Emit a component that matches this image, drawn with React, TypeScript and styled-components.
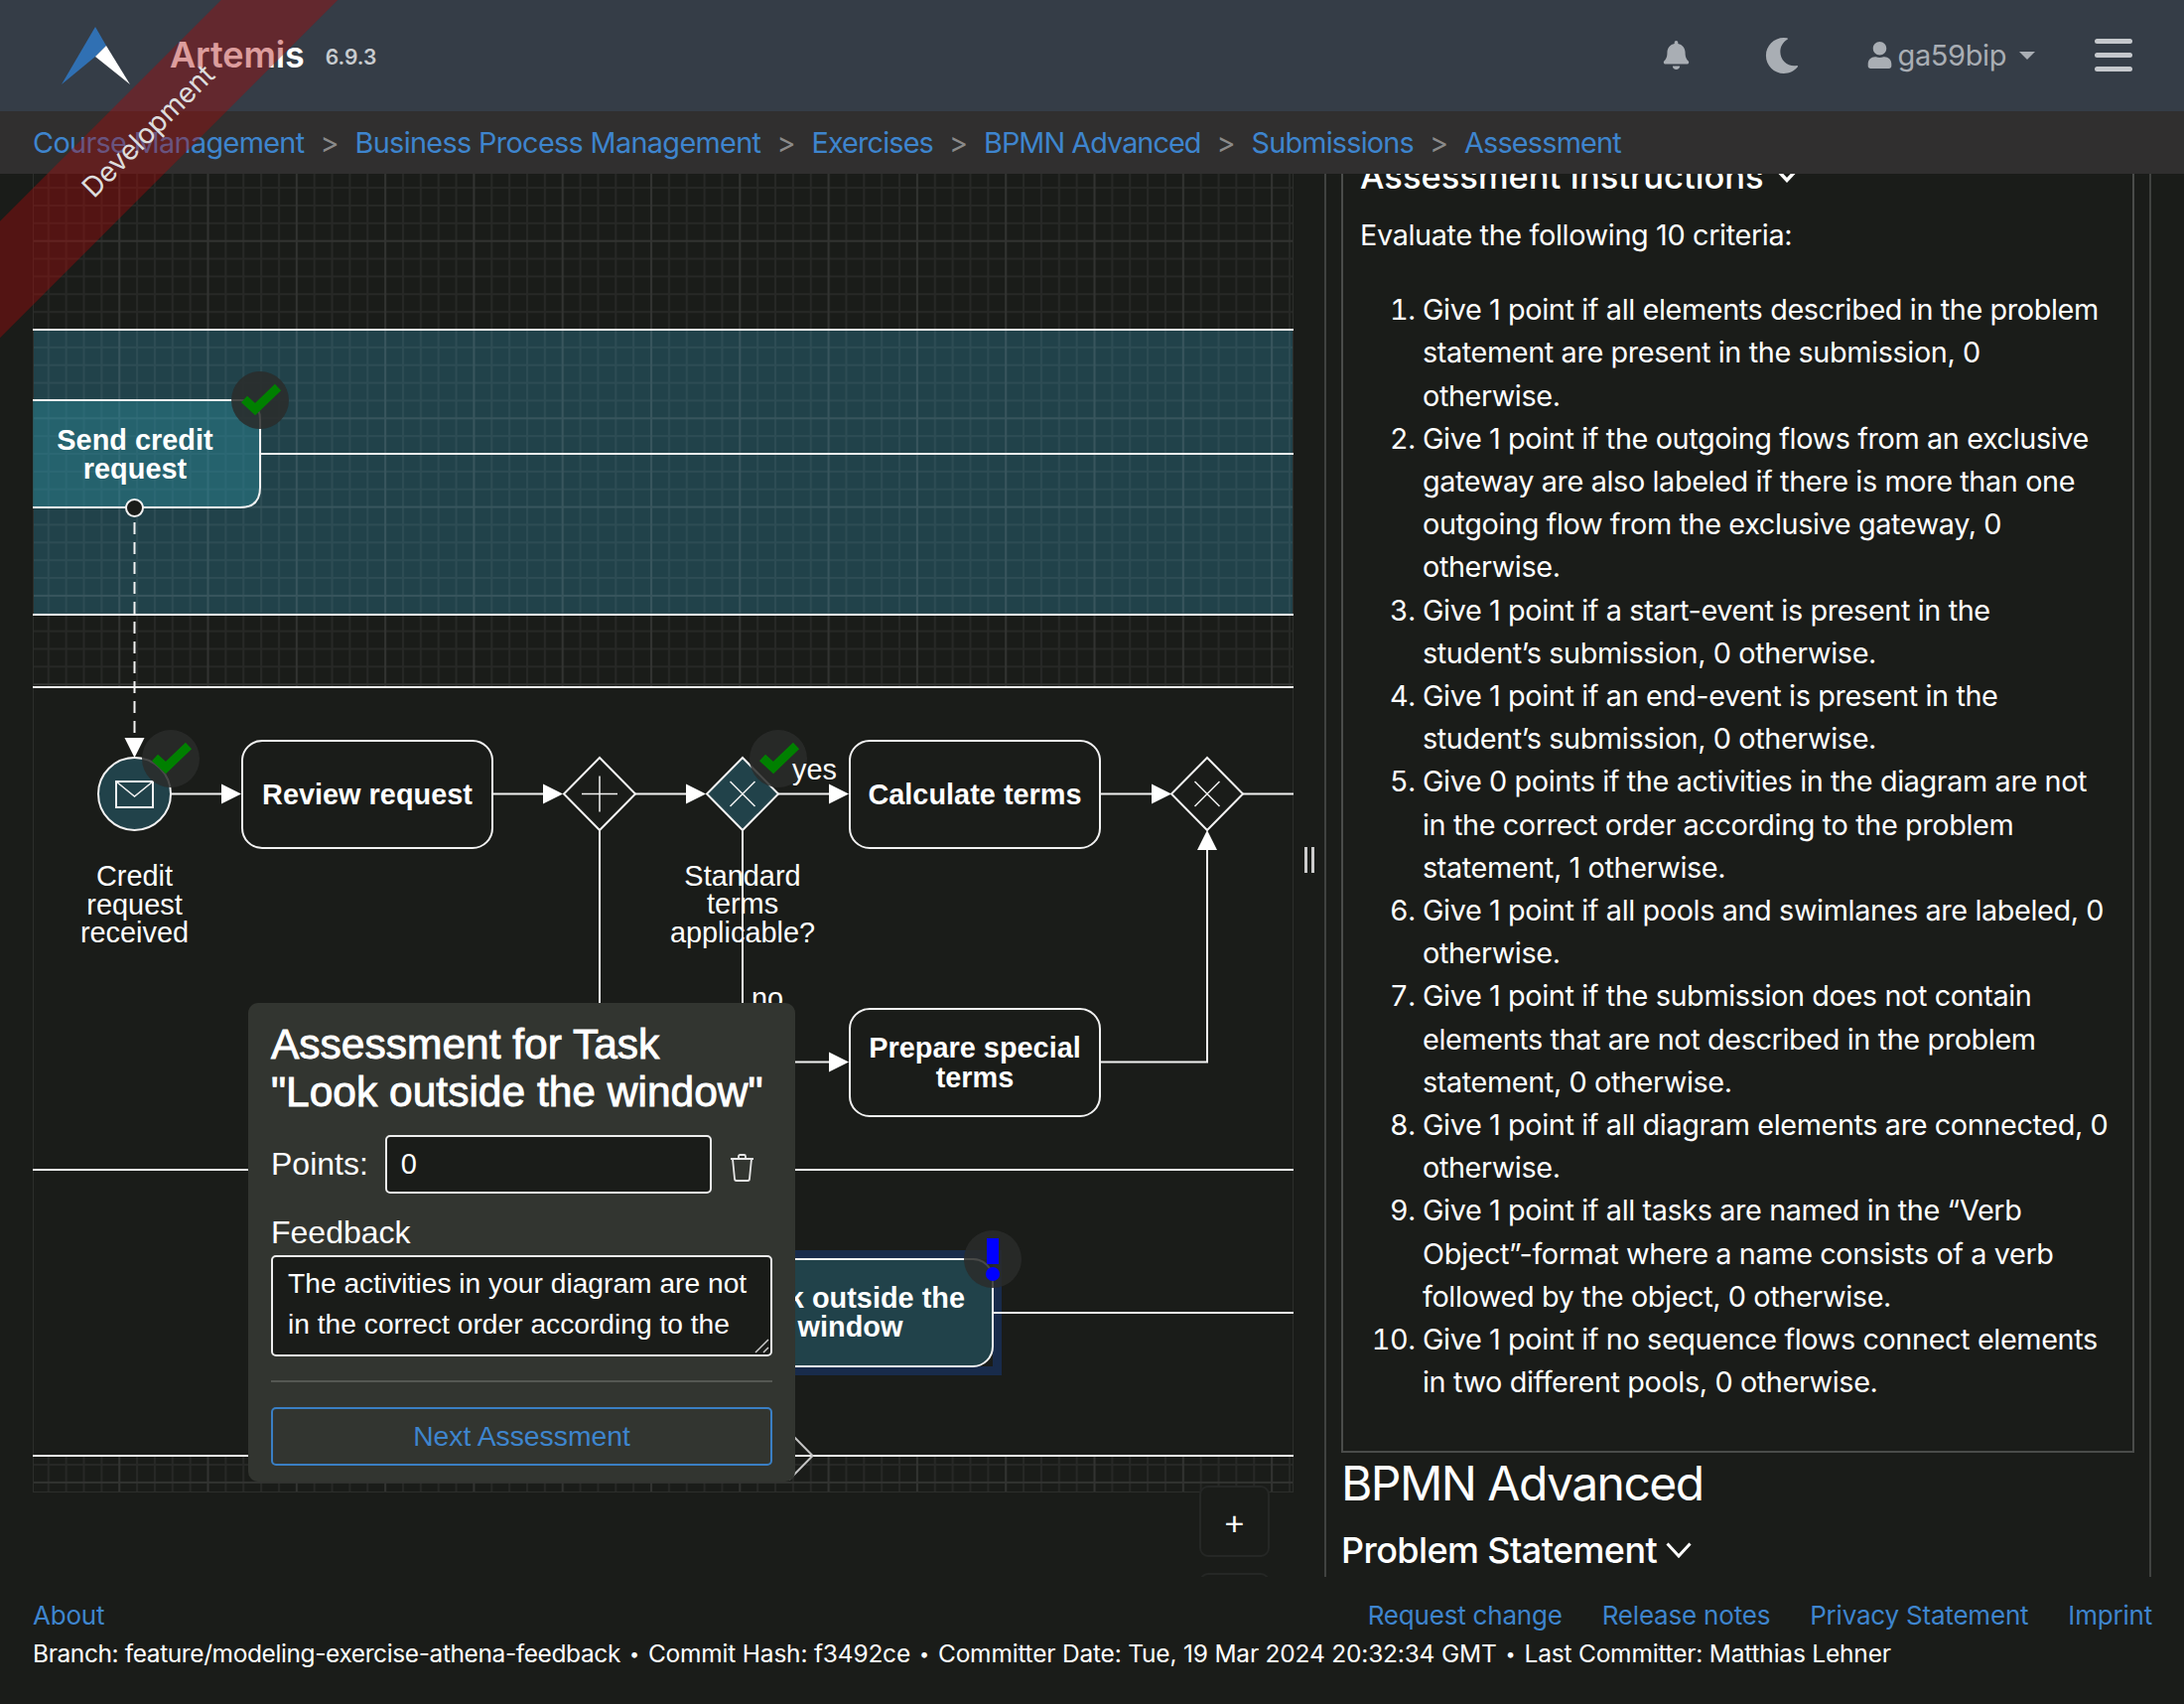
import React from 'react';
import styled, { createGlobalStyle } from 'styled-components';
import { FaBell, FaMoon, FaUser } from 'react-icons/fa';

const GlobalStyle = createGlobalStyle`
  html, body {
    margin: 0;
    padding: 0;
    background: #1a1c19;
  }
  * {
    box-sizing: border-box;
  }
`;

const Page = styled.div`
  position: relative;
  width: 2200px;
  height: 1716px;
  overflow: hidden;
  background: #1a1c19;
  color: #fff;
  font-family: Inter, "Noto Sans", sans-serif;
  font-size: 28.8px;
  line-height: 43.2px;
`;

const Ribbon = styled.div`
  position: absolute;
  left: -109px;
  top: 99px;
  width: 500px;
  height: 83px;
  padding-left: 24px;
  transform: rotate(-45deg);
  background: rgba(170, 10, 10, 0.4);
  color: #ddd;
  font-size: 28px;
  display: flex;
  align-items: center;
  justify-content: center;
  pointer-events: none;
  z-index: 10;
`;

const Navbar = styled.header`
  height: 112px;
  background: #353d47;
  display: flex;
  align-items: center;
  padding: 0 52px 0 62px;
`;

const Brand = styled.span`
  margin-left: 40px;
  font-size: 36px;
  font-weight: 600;
  letter-spacing: -0.1px;
`;

const Version = styled.span`
  margin-left: 21px;
  margin-top: 4px;
  font-size: 21px;
  font-weight: 600;
  color: #c8ccd0;
`;

const NavRight = styled.div`
  margin-left: auto;
  display: flex;
  align-items: center;
  color: #a9aeb4;
`;

const NavUser = styled.span`
  display: flex;
  align-items: center;
  margin-left: 67px;
  gap: 5px;
  font-size: 29px;
  letter-spacing: -0.4px;
`;

const Caret = styled.i`
  width: 0;
  height: 0;
  margin-left: 8px;
  border-left: 8px solid transparent;
  border-right: 8px solid transparent;
  border-top: 8px solid #a9aeb4;
`;

const Burger = styled.div`
  margin-left: 60px;
  width: 38px;
  display: flex;
  flex-direction: column;
  gap: 9px;
`;

const BurgerBar = styled.i`
  display: block;
  height: 5px;
  border-radius: 3px;
  background: #c5c8cc;
`;

const Breadcrumb = styled.nav`
  position: relative;
  z-index: 2;
  height: 63px;
  background: #302f2f;
  padding: 0 33px;
  display: flex;
  align-items: center;
  gap: 16px;
`;

const Link = styled.a`
  color: #3e85ce;
  text-decoration: none;
`;

const Crumb = styled(Link)<{ $spacing: number }>`
  letter-spacing: ${props => props.$spacing}px;
`;

const CrumbSep = styled.span`
  color: #8a8a8a;
`;

const FooterLink = styled(Link)`
  letter-spacing: -0.2px;
`;

const Main = styled.main`
  height: 1413px;
  padding-left: 33px;
  display: flex;
  overflow: hidden;
`;

const Editor = styled.section`
  position: relative;
  flex: 0 0 1270px;
  height: 100%;
`;

const Diagram = styled.svg`
  display: block;
`;

const Label = styled.text<{ $bold?: boolean; $center?: boolean }>`
  font-family: "Liberation Sans", Arial, sans-serif;
  font-size: 28.9px;
  font-weight: ${props => (props.$bold ? 700 : 400)};
  fill: #fff;
  text-anchor: ${props => (props.$bold || props.$center ? 'middle' : 'start')};
`;

const ZoomButton = styled.div<{ $top: number }>`
  position: absolute;
  left: 1175px;
  top: ${props => props.$top}px;
  width: 71px;
  height: 72px;
  padding-top: 5px;
  border: 2px solid #252725;
  border-radius: 9px;
  background: #1a1c19;
  display: flex;
  align-items: center;
  justify-content: center;
  font-family: "Liberation Sans", sans-serif;
  font-size: 34px;
`;

const Popup = styled.div`
  position: absolute;
  left: 217px;
  top: 835px;
  width: 551px;
  height: 482px;
  padding: 18px 23px 0 23px;
  border-radius: 10px;
  background: #323530;
  font-family: "Liberation Sans", Arial, sans-serif;
`;

const PopupTitle = styled.h4`
  margin: 0;
  font-size: 42.5px;
  line-height: 48px;
  font-weight: 400;
  -webkit-text-stroke: 0.9px #fff;
  white-space: nowrap;
`;

const PointsRow = styled.div`
  display: flex;
  align-items: center;
  margin-top: 19px;
  font-size: 32px;
`;

const PointsInput = styled.input`
  width: 329px;
  height: 59px;
  margin-left: 17px;
  padding: 0 14px;
  border: 2.5px solid #eee;
  border-radius: 5px;
  background: #1a1c19;
  color: #fff;
  font-family: inherit;
  font-size: 29px;
  outline: none;
`;

const TrashIcon = styled.svg`
  margin-left: 18px;
  margin-top: 6px;
`;

const FeedbackLabel = styled.div`
  margin-top: 16px;
  font-size: 32px;
  line-height: 46px;
`;

const FeedbackField = styled.div`
  position: relative;
  width: 505px;
  height: 102px;
`;

const FeedbackInput = styled.textarea`
  display: block;
  width: 100%;
  height: 100%;
  padding: 6px 15px;
  border: 2.5px solid #eee;
  border-radius: 5px;
  background: #1a1c19;
  color: #fff;
  font-family: inherit;
  font-size: 28.2px;
  line-height: 41px;
  overflow: hidden;
  resize: none;
  outline: none;
`;

const ResizeGrip = styled.svg`
  position: absolute;
  right: 3px;
  bottom: 3px;
`;

const PopupRule = styled.hr`
  margin: 24px 0 25px;
  border: 0;
  border-top: 2px solid #555853;
`;

const NextButton = styled.button`
  display: block;
  width: 505px;
  height: 59px;
  padding-top: 1px;
  border: 2.5px solid #3a7fc4;
  border-radius: 5px;
  background: transparent;
  color: #3e85ce;
  font-family: inherit;
  font-size: 28.3px;
`;

const Handle = styled.div`
  flex: 0 0 31px;
  display: flex;
  align-items: flex-start;
  justify-content: center;
  gap: 4px;
  padding-top: 678px;
`;

const HandleBar = styled.i`
  display: block;
  width: 3px;
  height: 26px;
  background: #ccc;
`;

const SidePanel = styled.aside`
  flex: 0 0 833px;
  height: 100%;
  padding: 0 15px;
  border-left: 2px solid #404240;
  border-right: 2px solid #404240;
  overflow: hidden;
`;

const InstructionBox = styled.div`
  height: 1314px;
  margin-top: -26px;
  padding: 0 17px;
  border: 2px solid #4a4c4a;
  border-top: 0;
`;

const InstructionHead = styled.h3`
  margin: 0;
  height: 66px;
  padding-bottom: 8px;
  display: flex;
  align-items: center;
  gap: 14px;
  font-size: 34.5px;
  font-weight: 500;
`;

const Intro = styled.p`
  margin: 0 0 32px;
  letter-spacing: -0.35px;
`;

const Criteria = styled.ol`
  margin: 0;
  padding-left: 63px;
  white-space: nowrap;
  letter-spacing: -0.38px;
`;

const ExerciseTitle = styled.h2`
  margin: 0;
  font-size: 48px;
  line-height: 62px;
  font-weight: 400;
  letter-spacing: -1.55px;
`;

const ProblemHead = styled.h3`
  margin: 11px 0 0;
  display: flex;
  align-items: center;
  gap: 9px;
  font-size: 36px;
  line-height: 50px;
  font-weight: 500;
  letter-spacing: -0.6px;
`;

const Footer = styled.footer`
  padding: 19px 32px 0 33px;
  font-size: 26px;
  line-height: 39px;
`;

const FooterRow = styled.div`
  display: flex;
  align-items: center;
  justify-content: space-between;
`;

const FooterLinks = styled.div`
  display: flex;
  gap: 40px;
`;

const BuildInfo = styled.div`
  display: flex;
  align-items: center;
  gap: 9px;
  font-size: 24.5px;
  letter-spacing: -0.2px;
`;

const BranchName = styled.span`
  letter-spacing: -0.4px;
`;

const BuildDot = styled.span`
  font-size: 18px;
`;

const crumbs = [
  { label: 'Course Management', spacing: -0.65 },
  { label: 'Business Process Management', spacing: -0.65 },
  { label: 'Exercises', spacing: -0.85 },
  { label: 'BPMN Advanced', spacing: -0.95 },
  { label: 'Submissions', spacing: -0.8 },
  { label: 'Assessment', spacing: -0.8 },
];

const criteria = [
  ['Give 1 point if all elements described in the problem', 'statement are present in the submission, 0', 'otherwise.'],
  ['Give 1 point if the outgoing flows from an exclusive', 'gateway are also labeled if there is more than one', 'outgoing flow from the exclusive gateway, 0', 'otherwise.'],
  ['Give 1 point if a start-event is present in the', 'student’s submission, 0 otherwise.'],
  ['Give 1 point if an end-event is present in the', 'student’s submission, 0 otherwise.'],
  ['Give 0 points if the activities in the diagram are not', 'in the correct order according to the problem', 'statement, 1 otherwise.'],
  ['Give 1 point if all pools and swimlanes are labeled, 0', 'otherwise.'],
  ['Give 1 point if the submission does not contain', 'elements that are not described in the problem', 'statement, 0 otherwise.'],
  ['Give 1 point if all diagram elements are connected, 0', 'otherwise.'],
  ['Give 1 point if all tasks are named in the “Verb', 'Object”-format where a name consists of a verb', 'followed by the object, 0 otherwise.'],
  ['Give 1 point if no sequence flows connect elements', 'in two different pools, 0 otherwise.'],
];

const WHITE = '#f2f2f2';
const TEAL = '#21424a';
const DARK = '#1a1c19';

const Arrow = ({ x, y, up }: { x: number; y: number; up?: boolean }) =>
  up ? (
    <polygon points={`${x},${y} ${x - 10},${y + 20} ${x + 10},${y + 20}`} fill="#fff" />
  ) : (
    <polygon points={`${x},${y} ${x - 20},${y - 10} ${x - 20},${y + 10}`} fill="#fff" />
  );

const Task = ({ x, y, lines, base }: { x: number; y: number; lines: string[]; base: number }) => (
  <g>
    <rect x={x} y={y} width={252} height={108} rx={20} fill={DARK} stroke={WHITE} strokeWidth={2} />
    {lines.map((line, i) => (
      <Label key={line} $bold x={x + 126} y={base + i * 29.5}>{line}</Label>
    ))}
  </g>
);

const Gateway = ({ cx, cy, fill, plus }: { cx: number; cy: number; fill: string; plus?: boolean }) => (
  <g>
    <polygon points={`${cx},${cy - 36.5} ${cx + 36},${cy} ${cx},${cy + 36.5} ${cx - 36},${cy}`} fill={fill} stroke={WHITE} strokeWidth={2} />
    {plus ? (
      <path d={`M${cx - 18} ${cy}H${cx + 18}M${cx} ${cy - 18}V${cy + 18}`} stroke={WHITE} strokeWidth={1.5} />
    ) : (
      <path d={`M${cx - 12.5} ${cy - 12.5}L${cx + 12.5} ${cy + 12.5}M${cx + 12.5} ${cy - 12.5}L${cx - 12.5} ${cy + 12.5}`} stroke={WHITE} strokeWidth={1.5} />
    )}
  </g>
);

const Check = ({ cx, cy }: { cx: number; cy: number }) => (
  <g>
    <circle cx={cx} cy={cy} r={29} fill="#2a2c2a" fillOpacity={0.85} />
    <path d={`M${cx - 16} ${cy - 1}L${cx - 5} ${cy + 9}L${cx + 18} ${cy - 13}`} fill="none" stroke="#008000" strokeWidth={9} />
  </g>
);

const BpmnDiagram = () => (
  <Diagram width={1270} height={1328} viewBox="33 175 1270 1328">
    <defs>
      <pattern id="minor" x={29.9} y={63.1} width={17.86} height={17.86} patternUnits="userSpaceOnUse">
        <path d="M17.86 1H1V17.86" fill="none" stroke="#fff" strokeOpacity={0.055} strokeWidth={2} />
      </pattern>
      <pattern id="major" x={29.9} y={63.1} width={89.3} height={89.3} patternUnits="userSpaceOnUse">
        <path d="M89.3 1H1V89.3" fill="none" stroke="#fff" strokeOpacity={0.05} strokeWidth={2} />
      </pattern>
    </defs>

    <rect x={33} y={332} width={1270} height={287} fill={TEAL} />
    <rect x={33} y={175} width={1270} height={1328} fill="url(#minor)" />
    <rect x={33} y={175} width={1270} height={1328} fill="url(#major)" />
    <rect x={33} y={692} width={1270} height={774} fill={DARK} />
    <path d="M33 175V1503H1303V175" fill="none" stroke="#2c2e2b" strokeWidth={2} />

    <path d="M33 332H1303M33 619H1303M33 692H1303M33 1178H1303M33 1466H1303" stroke={WHITE} strokeWidth={2} />

    <path d="M262 457H1303" stroke={WHITE} strokeWidth={2} />
    <path d="M33 403H242Q262 403 262 423V491Q262 511 242 511H33" fill="#2a8a99" fillOpacity={0.45} stroke={WHITE} strokeWidth={2} />
    <Label $bold x={136} y={453}>Send credit</Label>
    <Label $bold x={136} y={482}>request</Label>
    <Check cx={262} cy={403} />

    <path d="M135.5 526V745" stroke={WHITE} strokeWidth={2} strokeDasharray="12 8" />
    <circle cx={135.5} cy={511.5} r={8.5} fill={DARK} stroke={WHITE} strokeWidth={2} />
    <polygon points="135.5,763 125.5,743 145.5,743" fill="#fff" />

    <path d="M172 799.5H225" stroke={WHITE} strokeWidth={2} />
    <Arrow x={243} y={799.5} />
    <circle cx={135.5} cy={799.5} r={36.5} fill={TEAL} stroke={WHITE} strokeWidth={2} />
    <rect x={117} y={787} width={37} height={26} fill="none" stroke={WHITE} strokeWidth={2} />
    <path d="M117 787L135.5 802L154 787" fill="none" stroke={WHITE} strokeWidth={1.5} />
    <Check cx={172} cy={764} />
    <Label $center x={135.5} y={892}>Credit</Label>
    <Label $center x={135.5} y={921}>request</Label>
    <Label $center x={135.5} y={949}>received</Label>

    <Task x={244} y={746} lines={['Review request']} base={810} />
    <path d="M496 799.5H550" stroke={WHITE} strokeWidth={2} />
    <Arrow x={567} y={799.5} />
    <path d="M604 836V1010" stroke={WHITE} strokeWidth={2} />
    <Gateway cx={604} cy={799.5} fill={DARK} plus />

    <path d="M640 799.5H694" stroke={WHITE} strokeWidth={2} />
    <Arrow x={711} y={799.5} />
    <path d="M748 836V1020" stroke={WHITE} strokeWidth={2} />
    <Label $center x={748} y={892}>Standard</Label>
    <Label $center x={748} y={920}>terms</Label>
    <Label $center x={748} y={949}>applicable?</Label>
    <Gateway cx={748} cy={799.5} fill={TEAL} />
    <Check cx={784} cy={764} />
    <path d="M784 799.5H838" stroke={WHITE} strokeWidth={2} />
    <Arrow x={855} y={799.5} />
    <Label x={798} y={785}>yes</Label>
    <Label x={757} y={1015}>no</Label>

    <Task x={856} y={746} lines={['Calculate terms']} base={810} />
    <path d="M1108 799.5H1162" stroke={WHITE} strokeWidth={2} />
    <Arrow x={1180} y={799.5} />
    <Gateway cx={1216} cy={799.5} fill={DARK} />
    <path d="M1252 799.5H1303" stroke={WHITE} strokeWidth={2} />

    <path d="M780 1069.5H838" stroke={WHITE} strokeWidth={2} />
    <Arrow x={855} y={1069.5} />
    <Task x={856} y={1016} lines={['Prepare special', 'terms']} base={1065} />
    <path d="M1108 1069.5H1216V850" fill="none" stroke={WHITE} strokeWidth={2} />
    <Arrow x={1216} y={836} up />

    <rect x={738} y={1259} width={271} height={126} fill="#182b4b" />
    <rect x={720} y={1268} width={280} height={108} fill={DARK} />
    <rect x={720} y={1268} width={280} height={108} rx={20} fill={TEAL} stroke={WHITE} strokeWidth={2} />
    <Label $bold x={856.5} y={1317}>Look outside the</Label>
    <Label $bold x={856.5} y={1346}>window</Label>
    <path d="M1000 1322H1303" stroke={WHITE} strokeWidth={2} />
    <circle cx={1000} cy={1268} r={29} fill="#2a2c2a" fillOpacity={0.85} />
    <rect x={994} y={1247} width={12} height={26} fill="#0000ff" />
    <circle cx={1000} cy={1283} r={7} fill="#0000ff" />

    <path d="M795 1442L818.6 1466L795 1490" fill="none" stroke="#c4c4c4" strokeWidth={2} />
  </Diagram>
);

const App = () => (
  <Page>
    <GlobalStyle />
    <Navbar>
      <svg width="69" height="58" viewBox="0 0 69 58">
        <polygon points="34,0 0,58 34,30 45,19" fill="#3070b3" />
        <polygon points="45,19 69,58 34,30" fill="#fff" />
      </svg>
      <Brand>Artemis</Brand>
      <Version>6.9.3</Version>
      <NavRight>
        <FaBell size={29} />
        <FaMoon size={36} style={{ marginLeft: 74 }} />
        <NavUser>
          <FaUser size={27} />
          ga59bip
          <Caret />
        </NavUser>
        <Burger>
          <BurgerBar />
          <BurgerBar />
          <BurgerBar />
        </Burger>
      </NavRight>
    </Navbar>

    <Breadcrumb>
      {crumbs.map((crumb, i) => (
        <React.Fragment key={crumb.label}>
          {i > 0 && <CrumbSep>&gt;</CrumbSep>}
          <Crumb href="#" $spacing={crumb.spacing}>{crumb.label}</Crumb>
        </React.Fragment>
      ))}
    </Breadcrumb>

    <Main>
      <Editor>
        <BpmnDiagram />
        <ZoomButton $top={1321}>+</ZoomButton>
        <ZoomButton $top={1409} />
        <Popup>
          <PopupTitle>
            Assessment for Task
            <br />
            "Look outside the window"
          </PopupTitle>
          <PointsRow>
            Points:
            <PointsInput defaultValue="0" />
            <TrashIcon width="25" height="28" viewBox="0 0 25 28" fill="none" stroke="#e6e6e6" strokeWidth="1.8">
              <path d="M1 5H24M9 5V2.5Q9 1 10.5 1H14.5Q16 1 16 2.5V5M3 5L5 25Q5 27 7 27H18Q20 27 20 25L22 5" />
            </TrashIcon>
          </PointsRow>
          <FeedbackLabel>Feedback</FeedbackLabel>
          <FeedbackField>
            <FeedbackInput defaultValue="The activities in your diagram are not in the correct order according to the problem statement." />
            <ResizeGrip width="15" height="15" viewBox="0 0 15 15" stroke="#ccc" strokeWidth="1.5">
              <path d="M1 14L14 1M9 14L14 9" />
            </ResizeGrip>
          </FeedbackField>
          <PopupRule />
          <NextButton>Next Assessment</NextButton>
        </Popup>
      </Editor>

      <Handle>
        <HandleBar />
        <HandleBar />
      </Handle>

      <SidePanel>
        <InstructionBox>
          <InstructionHead>
            Assessment Instructions
            <svg width="18" height="12" viewBox="0 0 18 12" fill="none" stroke="#fff" strokeWidth="3.5">
              <path d="M1.5 1.5L9 9.5L16.5 1.5" />
            </svg>
          </InstructionHead>
          <Intro>Evaluate the following 10 criteria:</Intro>
          <Criteria>
            {criteria.map(lines => (
              <li key={lines[0]}>
                {lines.map((line, i) => (
                  <React.Fragment key={line}>
                    {i > 0 && <br />}
                    {line}
                  </React.Fragment>
                ))}
              </li>
            ))}
          </Criteria>
        </InstructionBox>
        <ExerciseTitle>BPMN Advanced</ExerciseTitle>
        <ProblemHead>
          Problem Statement
          <svg width="26" height="16" viewBox="0 0 26 16" fill="none" stroke="#fff" strokeWidth="3">
            <path d="M1.5 1.5L13 14L24.5 1.5" />
          </svg>
        </ProblemHead>
      </SidePanel>
    </Main>

    <Footer>
      <FooterRow>
        <FooterLink href="#">About</FooterLink>
        <FooterLinks>
          <FooterLink href="#">Request change</FooterLink>
          <FooterLink href="#">Release notes</FooterLink>
          <FooterLink href="#">Privacy Statement</FooterLink>
          <FooterLink href="#">Imprint</FooterLink>
        </FooterLinks>
      </FooterRow>
      <BuildInfo>
        <BranchName>Branch: feature/modeling-exercise-athena-feedback</BranchName>
        <BuildDot>•</BuildDot>
        <span>Commit Hash: f3492ce</span>
        <BuildDot>•</BuildDot>
        <span>Committer Date: Tue, 19 Mar 2024 20:32:34 GMT</span>
        <BuildDot>•</BuildDot>
        <span>Last Committer: Matthias Lehner</span>
      </BuildInfo>
    </Footer>

    <Ribbon>Development</Ribbon>
  </Page>
);

export default App;
